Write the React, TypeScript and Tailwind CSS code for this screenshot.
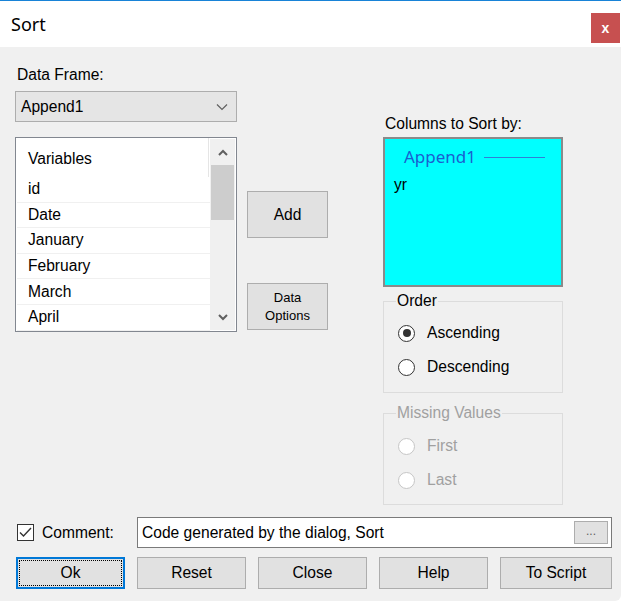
import React from "react";

const items = ["id", "Date", "January", "February", "March", "April"];

const Radio = ({ label, checked, disabled }: { label: string; checked?: boolean; disabled?: boolean }) => (
  <div className="flex items-center h-[24px]">
    <div
      className={`w-[17px] h-[17px] rounded-full border bg-white flex items-center justify-center ${
        disabled ? "border-[#c6c6c6]" : "border-[#333333]"
      }`}
    >
      {checked && <div className="w-[8px] h-[8px] rounded-full bg-[#333333]"></div>}
    </div>
    <span className={`ml-[12px] ${disabled ? "text-[#a0a0a0]" : "text-black"}`}>{label}</span>
  </div>
);

const Button = ({ label, focused, wide }: { label: string; focused?: boolean; wide?: boolean }) => (
  <button
    className={`${wide ? "w-[112px]" : "w-[109px]"} h-[32px] bg-[#e1e1e1] flex items-center justify-center ${
      focused ? "border-2 border-[#0078d7] p-[1px]" : "border border-[#adadad]"
    }`}
  >
    {focused ? (
      <span className="w-full h-full border border-dotted border-black flex items-center justify-center">{label}</span>
    ) : (
      label
    )}
  </button>
);

export default function App() {
  return (
    <div className="w-[623px] h-[605px] bg-white" style={{ fontFamily: '"Liberation Sans", Arial, sans-serif' }}>
      <div className="w-[621px] h-[601px] bg-[#f0f0f0] border-t border-[#1883d7] rounded-br-[6px] flex flex-col text-[15.6px] leading-[18px] text-black">
        {/* Title bar */}
        <div className="h-[46px] bg-white flex justify-between">
          <div
            className="pl-[11px] pt-[11px] text-[18px] leading-[24px] text-black"
            style={{ fontFamily: '"Noto Sans", "Open Sans", sans-serif' }}
          >
            Sort
          </div>
          <div className="pt-[12px] pr-[1px]">
            <div className="w-[29px] h-[30px] bg-[#c75050] flex items-center justify-center text-white font-bold text-[14px]">
              x
            </div>
          </div>
        </div>

        {/* Main area */}
        <div className="flex pl-[15px] pt-[19px]">
          {/* Left column */}
          <div className="w-[222px] flex flex-col">
            <div className="h-[18px] pl-[2px]">Data Frame:</div>
            <div className="mt-[7px] h-[31px] bg-[#e5e5e5] border border-[#adadad] flex items-center justify-between pl-[5px] pr-[8px]">
              <span>Append1</span>
              <svg width="12" height="8" viewBox="0 0 12 8" fill="none">
                <path d="M1 1.5 L6 6.5 L11 1.5" stroke="#606060" strokeWidth="1.2" />
              </svg>
            </div>
            <div className="mt-[15px] h-[195px] bg-white border border-[#828790] flex">
              <div className="flex-1 flex flex-col pl-[1px]">
                <div className="h-[39px] shrink-0 flex items-center pl-[11px] pt-[3px] border-r border-[#e5e5e5] mr-[1px]">
                  Variables
                </div>
                {items.map((it) => (
                  <div key={it} className="h-[25.6px] shrink-0 flex items-center pl-[11px] border-b border-[#f0f0f0]">
                    {it}
                  </div>
                ))}
              </div>
              <div className="w-[25px] bg-[#f0f0f0] my-[1px] mr-[1px] flex flex-col items-center">
                <div className="h-[26px] flex items-center justify-center">
                  <svg width="10" height="7" viewBox="0 0 10 7" fill="none">
                    <path d="M1 6 L5 2 L9 6" stroke="#606060" strokeWidth="2" />
                  </svg>
                </div>
                <div className="w-[23px] h-[55px] bg-[#cdcdcd]"></div>
                <div className="flex-1"></div>
                <div className="h-[26px] flex items-center justify-center">
                  <svg width="10" height="7" viewBox="0 0 10 7" fill="none">
                    <path d="M1 1 L5 5 L9 1" stroke="#606060" strokeWidth="2" />
                  </svg>
                </div>
              </div>
            </div>
          </div>

          {/* Middle buttons */}
          <div className="ml-[10px] w-[81px] flex flex-col">
            <button className="mt-[125px] h-[47px] bg-[#e1e1e1] border border-[#adadad]">Add</button>
            <button className="mt-[45px] h-[47px] bg-[#e1e1e1] border border-[#adadad] text-[13px] leading-[18px] flex flex-col items-center justify-center">
              <span>Data</span>
              <span>Options</span>
            </button>
          </div>

          {/* Right column */}
          <div className="ml-[55px] w-[180px] flex flex-col">
            <div className="mt-[49px] h-[18px] pl-[2px]">Columns to Sort by:</div>
            <div className="mt-[4px] h-[150px] bg-[#00ffff] border-2 border-[#8a8a8a] flex flex-col">
              <div className="flex items-center pl-[19px] pt-[7px] pr-[16px]">
                <span
                  className="text-[#1a5fd0] text-[17px] leading-[22px]"
                  style={{ fontFamily: '"Noto Sans", "Open Sans", sans-serif' }}
                >
                  Append1
                </span>
                <div className="flex-1 ml-[8px] h-px bg-[#2f7fd6]"></div>
              </div>
              <div className="pl-[9px] mt-[8px] text-black">yr</div>
            </div>

            <fieldset className="mt-[5px] h-[101px] border border-[#dcdcdc] px-[12px]">
              <legend className="px-[1px] leading-[18px]">Order</legend>
              <div className="flex flex-col gap-[10px] pt-[11px] pl-[2px]">
                <Radio label="Ascending" checked />
                <Radio label="Descending" />
              </div>
            </fieldset>

            <fieldset className="mt-[11px] h-[101px] border border-[#dcdcdc] px-[12px]">
              <legend className="px-[1px] leading-[18px] text-[#a0a0a0]">Missing Values</legend>
              <div className="flex flex-col gap-[10px] pt-[12px] pl-[2px]">
                <Radio label="First" disabled />
                <Radio label="Last" disabled />
              </div>
            </fieldset>
          </div>
        </div>

        {/* Comment row */}
        <div className="mt-[12px] h-[31px] flex items-center pl-[17px] pr-[9px]">
          <div className="w-[17px] h-[17px] border border-[#333333] bg-white flex items-center justify-center">
            <svg width="13" height="11" viewBox="0 0 13 11" fill="none">
              <path d="M1 5.5 L4.5 9 L12 1" stroke="#333333" strokeWidth="1.4" />
            </svg>
          </div>
          <span className="ml-[8px] w-[95px]">Comment:</span>
          <div className="flex-1 h-[31px] bg-white border border-[#7a7a7a] flex items-center pl-[4px] pr-[3px]">
            <span className="flex-1">Code generated by the dialog, Sort</span>
            <div className="w-[34px] h-[23px] bg-[#e1e1e1] border border-[#adadad] flex items-center justify-center text-[12px] text-[#606060] pb-[4px]">
              ...
            </div>
          </div>
        </div>

        {/* Buttons row */}
        <div className="mt-[9px] flex gap-[12px] pl-[16px]">
          <Button label="Ok" focused />
          <Button label="Reset" />
          <Button label="Close" />
          <Button label="Help" />
          <Button label="To Script" wide />
        </div>
      </div>
    </div>
  );
}
